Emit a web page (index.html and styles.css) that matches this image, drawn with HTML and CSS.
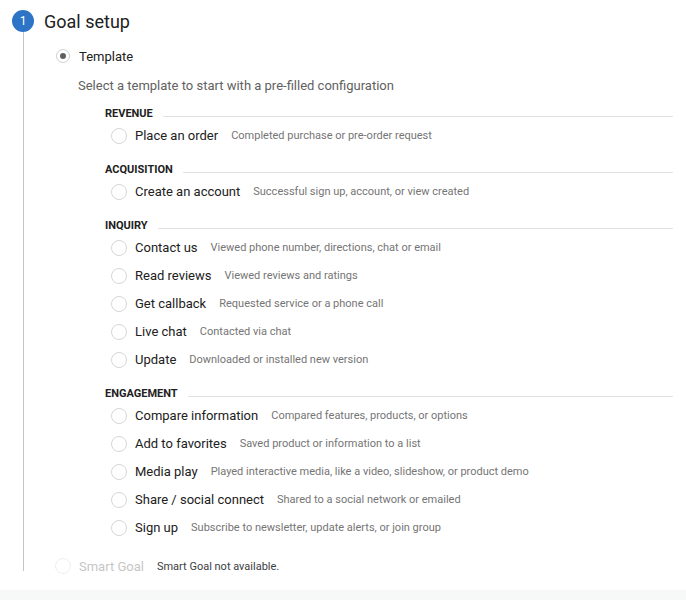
FILE: index.html
```html
<!DOCTYPE html>
<html>
<head>
<meta charset="utf-8">
<link rel="stylesheet" href="styles.css">
</head>
<body>
<div class="page">
  <div class="step-head">
    <div class="step-num">1</div>
    <div class="step-title">Goal setup</div>
  </div>
  <div class="step-body">
    <div class="choice">
      <span class="radio radio-checked"></span>
      <span class="choice-label">Template</span>
    </div>
    <div class="hint">Select a template to start with a pre-filled configuration</div>
    <div class="groups">
      <div class="group">
        <div class="group-title">REVENUE</div>
        <div class="opt"><span class="radio"></span><span class="opt-label">Place an order</span><span class="opt-desc">Completed purchase or pre-order request</span></div>
      </div>
      <div class="group">
        <div class="group-title">ACQUISITION</div>
        <div class="opt"><span class="radio"></span><span class="opt-label">Create an account</span><span class="opt-desc">Successful sign up, account, or view created</span></div>
      </div>
      <div class="group">
        <div class="group-title">INQUIRY</div>
        <div class="opt"><span class="radio"></span><span class="opt-label">Contact us</span><span class="opt-desc">Viewed phone number, directions, chat or email</span></div>
        <div class="opt"><span class="radio"></span><span class="opt-label">Read reviews</span><span class="opt-desc">Viewed reviews and ratings</span></div>
        <div class="opt"><span class="radio"></span><span class="opt-label">Get callback</span><span class="opt-desc">Requested service or a phone call</span></div>
        <div class="opt"><span class="radio"></span><span class="opt-label">Live chat</span><span class="opt-desc">Contacted via chat</span></div>
        <div class="opt"><span class="radio"></span><span class="opt-label">Update</span><span class="opt-desc">Downloaded or installed new version</span></div>
      </div>
      <div class="group">
        <div class="group-title">ENGAGEMENT</div>
        <div class="opt"><span class="radio"></span><span class="opt-label">Compare information</span><span class="opt-desc">Compared features, products, or options</span></div>
        <div class="opt"><span class="radio"></span><span class="opt-label">Add to favorites</span><span class="opt-desc">Saved product or information to a list</span></div>
        <div class="opt"><span class="radio"></span><span class="opt-label">Media play</span><span class="opt-desc">Played interactive media, like a video, slideshow, or product demo</span></div>
        <div class="opt"><span class="radio"></span><span class="opt-label">Share / social connect</span><span class="opt-desc">Shared to a social network or emailed</span></div>
        <div class="opt"><span class="radio"></span><span class="opt-label">Sign up</span><span class="opt-desc">Subscribe to newsletter, update alerts, or join group</span></div>
      </div>
    </div>
    <div class="choice smart">
      <span class="radio radio-disabled"></span>
      <span class="choice-label disabled">Smart Goal</span>
      <span class="smart-note">Smart Goal not available.</span>
    </div>
  </div>
  <div class="footer-bar"></div>
</div>
</body>
</html>
```
FILE: styles.css
```css
* { box-sizing: border-box; }
html, body { margin: 0; padding: 0; background: #fff; }
body { font-family: Roboto, "Noto Sans", Arial, sans-serif; color: #212121; }
.page { width: 686px; height: 600px; overflow: hidden; }

.step-head { display: flex; align-items: center; height: 22px; margin-top: 10px; padding-left: 12px; }
.step-num { width: 22px; height: 22px; border-radius: 50%; background: #2d74c6; color: #fff; font-size: 12px; line-height: 22px; text-align: center; }
.step-title { margin-left: 10px; font-size: 18px; line-height: 24px; padding-top: 2px; color: #212121; }

.step-body { margin-left: 23px; border-left: 1px solid #c4c4c4; padding: 14px 0 0 32px; height: 539px; }

.choice { display: flex; align-items: center; height: 20px; }
.radio { flex: none; width: 16px; height: 16px; border-radius: 50%; border: 1px solid #d6d6d6; position: relative; }
.radio-checked { width: 14px; height: 14px; border: 1px solid #cfcfcf; }
.radio-checked::after { content: ""; position: absolute; left: 3px; top: 3px; width: 6px; height: 6px; border-radius: 50%; background: #5f5f5f; }
.radio-disabled { border-color: #efefef; }
.choice-label { margin-left: 9px; font-size: 13px; }
.choice-label.disabled { color: #c6c6c6; margin-left: 8px; }

.hint { margin: 10px 0 0 22px; font-size: 13px; line-height: 20px; color: #616161; }

.groups { margin: 9px 13px 0 49px; }
.group + .group { margin-top: 11px; }
.group-title { display: flex; align-items: center; height: 16px; font-size: 11px; font-weight: 700; color: #212121; margin-bottom: 1px; }
.group-title::after { content: ""; flex: 1; height: 1px; background: #e2e2e2; margin: 6px 0 0 10px; }
.opt { display: flex; align-items: center; height: 28px; padding-left: 6px; padding-bottom: 1px; }
.opt-label { margin-left: 8px; font-size: 13px; color: #212121; }
.opt-desc { margin-left: 13px; font-size: 11px; color: #757575; }

.smart { margin-top: 17px; height: 14px; }
.smart .radio { margin-left: -1px; }
.smart-note { margin-left: 13px; font-size: 11px; color: #3c4043; }

.footer-bar { margin-top: 19px; height: 40px; background: #f7f8f8; }
```
